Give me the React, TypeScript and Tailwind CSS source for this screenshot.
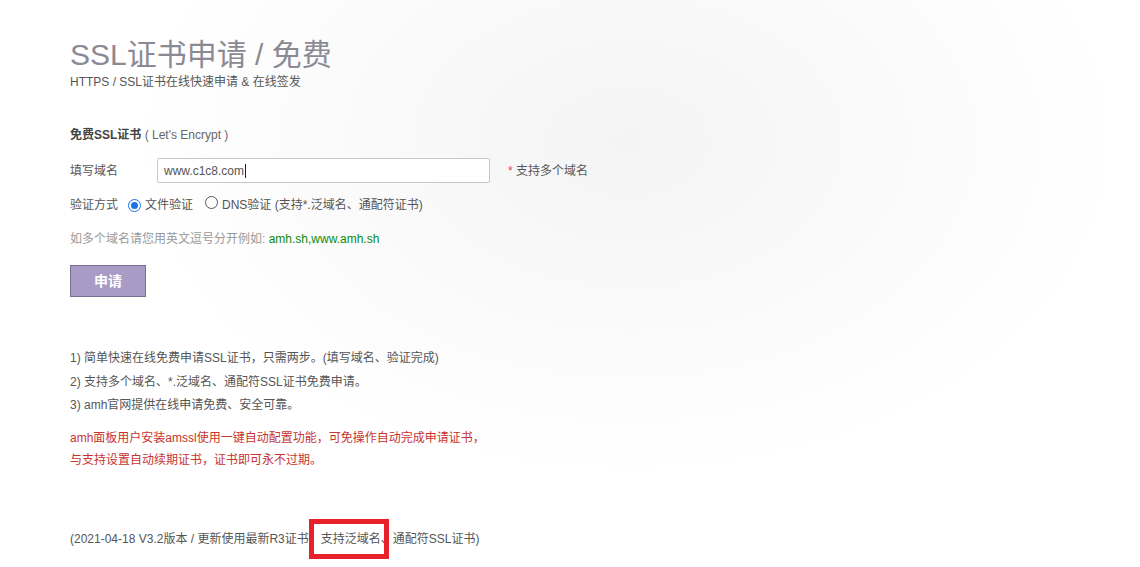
import React from "react";

const font = { fontFamily: '"Liberation Sans", Arial, "Noto Sans CJK SC", sans-serif' };

function Radio({ checked }: { checked?: boolean }) {
  return checked ? (
    <span className="inline-flex h-[13px] w-[13px] items-center justify-center rounded-full border-[1.5px] border-[#1a73e8] bg-white">
      <span className="h-[7px] w-[7px] rounded-full bg-[#1a73e8]" />
    </span>
  ) : (
    <span className="inline-block h-[13px] w-[13px] rounded-full border border-[#555] bg-white" />
  );
}

export default function App() {
  return (
    <div
      className="h-[567px] w-[1140px] overflow-hidden bg-[radial-gradient(ellipse_at_55%_25%,#f5f4f4_0%,#fbfafa_30%,#ffffff_55%)] text-[12px] text-[#555]"
      style={font}
    >
      <div className="flex flex-col pl-[70px] pt-[37px]">
        <h1 className="text-[30px] leading-[36px] text-[#8b8a94]">SSL证书申请 / 免费</h1>
        <div className="mt-[1px] leading-[16px] text-[#555]">HTTPS / SSL证书在线快速申请 &amp; 在线签发</div>

        <div className="mt-[37px] leading-[16px]">
          <span className="font-bold text-[#444]">免费SSL证书</span>
          <span className="text-[#666]"> ( Let's Encrypt )</span>
        </div>

        <div className="mt-[15px] flex h-[25px] items-center">
          <span className="w-[87px]">填写域名</span>
          <div className="flex h-[25px] w-[333px] items-center rounded-[2px] border border-[#c8c8c8] bg-white pl-[6px] text-[#555]">
            www.c1c8.com<span className="ml-[1px] inline-block h-[14px] w-[1px] bg-[#222]" />
          </div>
          <span className="ml-[18px]">
            <span className="text-[#e0455a]">*</span> 支持多个域名
          </span>
        </div>

        <div className="mt-[12px] flex h-[20px] items-center">
          <span className="w-[58px]">验证方式</span>
          <Radio checked />
          <span className="ml-[4px]">文件验证</span>
          <span className="ml-[12px]">
            <Radio />
          </span>
          <span className="ml-[4px]">DNS验证 (支持*.泛域名、通配符证书)</span>
        </div>

        <div className="mt-[16px] leading-[16px] text-[#999]">
          如多个域名请您用英文逗号分开例如: <span className="text-[#0a8a0a]">amh.sh,www.amh.sh</span>
        </div>

        <button className="mt-[18px] flex h-[32px] w-[76px] items-center justify-center border border-[#7a6d92] bg-[#a99bc6] text-[14px] font-bold text-white">
          申请
        </button>

        <div className="mt-[50px] flex flex-col leading-[23.5px]">
          <div>1) 简单快速在线免费申请SSL证书，只需两步。(填写域名、验证完成)</div>
          <div>2) 支持多个域名、*.泛域名、通配符SSL证书免费申请。</div>
          <div>3) amh官网提供在线申请免费、安全可靠。</div>
        </div>

        <div className="mt-[9px] flex flex-col leading-[22px] text-[#c7332f]">
          <div>amh面板用户安装amssl使用一键自动配置功能，可免操作自动完成申请证书，</div>
          <div>与支持设置自动续期证书，证书即可永不过期。</div>
        </div>

        <div className="mt-[60px] leading-[16px]">
          (2021-04-18 V3.2版本 / 更新使用最新R3证书
          <span className="relative">
            、支持泛域名、
            <span className="absolute left-[0px] top-[-13px] h-[40px] w-[80px] border-[5px] border-[#e8202a]" />
          </span>
          通配符SSL证书)
        </div>
      </div>
    </div>
  );
}
